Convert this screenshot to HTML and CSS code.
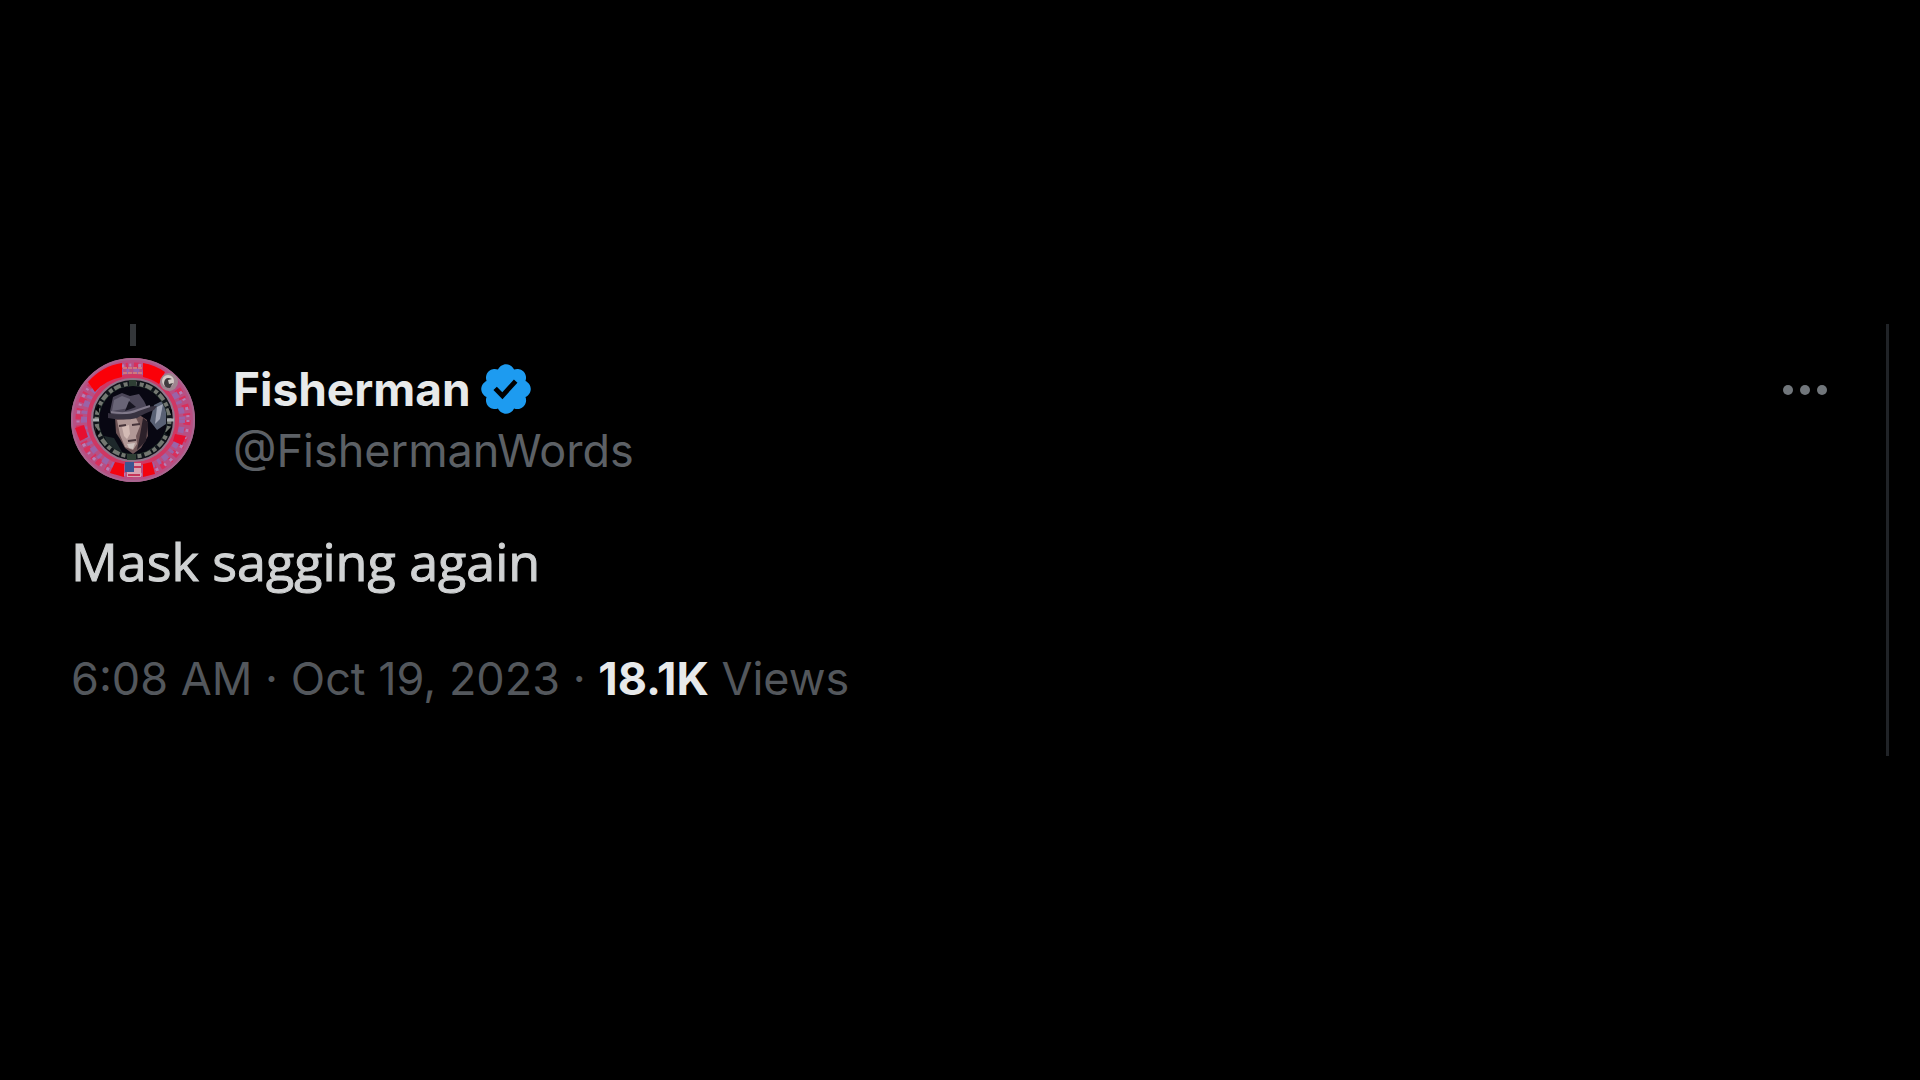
FILE: index.html
```html
<!DOCTYPE html>
<html lang="en">

<head>
    <meta charset="UTF-8">
    <meta name="viewport" content="width=device-width, initial-scale=1.0">
    <title>Fisherman</title>
    <link rel="stylesheet" href="styles.css">
</head>

<body>
    <main class="timeline">
        <article class="tweet">
            <!-- Line to the tweet above -->
            <div class="thread-line"></div>

            <header class="tweet-header">
                <a href="#" class="avatar" aria-label="Fisherman">
                    <svg viewBox="0 0 124 124">
                        <defs>
                            <clipPath id="face">
                                <circle cx="62" cy="62" r="34" />
                            </clipPath>
                        </defs>
                        <circle cx="62" cy="62" r="62" fill="#b84f83" />
                        <circle cx="62" cy="62" r="61" fill="none" stroke="#a8668f" stroke-width="2" />
                        <!-- Lettering band -->
                        <circle cx="62" cy="62" r="54" fill="none" stroke="#d8305c" stroke-width="7" stroke-dasharray="5 4 2 6" />
                        <circle cx="62" cy="62" r="49" fill="none" stroke="#9a63a8" stroke-width="6" stroke-dasharray="3 4 6 3" />
                        <circle cx="62" cy="62" r="55" fill="none" stroke="#b67fb6" stroke-width="3" stroke-dasharray="2 7 3 5" />
                        <circle cx="62" cy="62" r="44" fill="none" stroke="#cf3763" stroke-width="4" />
                        <!-- Red blocks -->
                        <path d="M17 24Q31 8 51 5v14Q34 22 24 34z" fill="#fb0008" />
                        <path d="M72 5q12 2 22 9l-6 12q-7-5-16-7z" fill="#fb0008" />
                        <path d="M44 104l9 2v13l-14-4z" fill="#f2040f" />
                        <path d="M72 106l9-2 3 12-12 3z" fill="#f2040f" />
                        <path d="M4 70l9-3 4 12-8 4zM104 76l11 2-4 9-9-4z" fill="#e60f30" />
                        <path d="M52 10h19M52 15h19" stroke="#d0787c" stroke-width="2" stroke-dasharray="4 1" />
                        <!-- Flag -->
                        <path d="M54 104h9v10h-9z" fill="#3b5691" />
                        <path d="M63 105h7v14H56v-5h7z" fill="#d8a2b0" />
                        <path d="M63 109h7M57 117h12" stroke="#c5365a" stroke-width="2" />
                        <!-- Inner ring -->
                        <circle cx="62" cy="62" r="41" fill="#10141a" stroke="#93758b" stroke-width="2" />
                        <circle cx="62" cy="62" r="36" fill="none" stroke="#737771" stroke-width="5" stroke-dasharray="4 2 7 3" />
                        <circle cx="62" cy="62" r="33" fill="none" stroke="#293a32" stroke-width="3" />
                        <path d="M22 62h8M94 62h9" stroke="#a9adb0" stroke-width="3" />
                        <path d="M58 22h7v10h-7zM56 94h9v8h-9z" fill="#2e3e34" />
                        <path d="M24 51l4-5v9zM97 49l4 3v7zM24 68l5 7-3 3zM101 68l-3 10-4-3z" fill="#020408" />
                        <g clip-path="url(#face)">
                            <rect x="28" y="28" width="68" height="68" fill="#080712" />
                            <path d="M83 47l12-6v25l-9 6-7-9z" fill="#596174" />
                            <path d="M86 49l6-3-3 15-5 5z" fill="#a3a7b7" />
                            <path d="M44 59l26-1 6 4 1 16-7 12-8 6-8-6-5-9-4-6z" fill="#6e5456" />
                            <path d="M46 62l19-2 4 8-4 10 1 8-4 6-8-3-5-12z" fill="#b19896" />
                            <path d="M51 69l7-2 1 9-3 5-3-3z" fill="#d3bbb5" />
                            <path d="M48 68l7-1M61 67l8-1M57 83l8-1" stroke="#46343a" stroke-width="2" />
                            <path d="M56 86l8-1-2 6-4-1z" fill="#cfc3c0" />
                            <path d="M72 60l5 4-2 19-9 9 3-15z" fill="#2b2029" />
                            <path d="M39 53l3-14 9-4 8 3 9-2 5 7 3 6-13 9-22 2z" fill="#4b4658" />
                            <path d="M43 42l8-4 8 3-1 9-17 3z" fill="#696577" />
                            <path d="M58 43l7 6-11 4z" fill="#171521" />
                            <path d="M37 55q15 4 29-2 10-5 20-5l-3 4q-11 4-17 8-13 3-29 0z" fill="#373240" />
                            <path d="M40 54q16 3 27-2l12-4" fill="none" stroke="#80798a" stroke-width="2" />
                            <path d="M33 78l10 2 8 14-11-2z" fill="#1e282b" />
                        </g>
                        <!-- Small round badge -->
                        <circle cx="98" cy="24" r="9" fill="#9e8590" />
                        <circle cx="97" cy="23" r="6" fill="#d4cbc7" />
                        <path d="M93 25q1-7 8-4l-4 1 1 4 4-1-3 5q-6 0-6-5z" fill="#413b3e" />
                    </svg>
                </a>

                <div class="author">
                    <div class="name-row">
                        <a href="#" class="name">Fisherman</a>
                        <svg class="verified" viewBox="0 0 22 22" role="img" aria-label="Verified account">
                            <path d="M20.396 11c-.018-.646-.215-1.275-.57-1.816-.354-.54-.852-.972-1.438-1.246.223-.607.27-1.264.14-1.897-.131-.634-.437-1.218-.882-1.687-.47-.445-1.053-.75-1.687-.882-.633-.13-1.29-.083-1.897.14-.273-.587-.704-1.086-1.245-1.44S11.647 1.62 11 1.604c-.646.017-1.273.213-1.813.568s-.969.854-1.24 1.44c-.608-.223-1.267-.272-1.902-.14-.635.13-1.22.436-1.69.882-.445.47-.749 1.055-.878 1.688-.13.633-.08 1.29.144 1.896-.587.274-1.087.705-1.443 1.245-.356.54-.555 1.17-.574 1.817.02.647.218 1.276.574 1.817.356.54.856.972 1.443 1.245-.224.606-.274 1.263-.144 1.896.13.634.433 1.218.877 1.688.47.443 1.054.747 1.687.878.633.132 1.29.084 1.897-.136.274.586.705 1.084 1.246 1.439.54.354 1.17.551 1.816.569.647-.016 1.276-.213 1.817-.567s.972-.854 1.245-1.44c.604.239 1.266.296 1.903.164.636-.132 1.22-.447 1.68-.907.46-.46.776-1.044.908-1.681s.075-1.299-.165-1.903c.586-.274 1.084-.705 1.439-1.246.354-.54.551-1.17.569-1.816zM9.662 14.85l-3.429-3.428 1.293-1.302 2.072 2.072 4.4-4.794 1.347 1.246z" />
                        </svg>
                    </div>
                    <a href="#" class="handle">@FishermanWords</a>
                </div>

                <button type="button" class="more" aria-label="More">
                    <svg viewBox="0 0 46 12">
                        <circle cx="6" cy="6" r="5" />
                        <circle cx="23" cy="6" r="5" />
                        <circle cx="40" cy="6" r="5" />
                    </svg>
                </button>
            </header>

            <p class="tweet-text">Mask sagging again</p>

            <div class="tweet-meta">
                <a href="#"><time datetime="2023-10-19T06:08">6:08 AM · Oct 19, 2023</time></a> ·
                <strong>18.1K</strong> Views
            </div>
        </article>
    </main>
</body>

</html>
```

FILE: styles.css
```css
body {
    font-family: Inter, Roboto, sans-serif;
    margin: 0;
    background-color: #000;
    color: #e7e9ea;
}

a {
    color: inherit;
    text-decoration: none;
}

.timeline {
    display: flex;
    flex-direction: column;
    justify-content: center;
    min-height: 100vh;
}

.tweet {
    margin-right: 31px;
    padding: 0 58px 46px 71px;
    border-right: 3px solid #202327;
}

.thread-line {
    width: 6px;
    height: 22px;
    margin: 0 0 12px 59px;
    background-color: #333639;
}

.tweet-header {
    display: flex;
    align-items: flex-start;
}

.avatar {
    width: 124px;
    height: 124px;
    margin-right: 38px;
}

.avatar svg,
.verified,
.more svg {
    display: block;
}

.author {
    flex: 1;
    line-height: 62px;
}

.name-row {
    display: flex;
    align-items: center;
    height: 62px;
}

.name {
    font-size: 46px;
    font-weight: 700;
}

.verified {
    width: 58px;
    height: 58px;
    margin-left: 6px;
    fill: #1d9bf0;
}

.handle {
    display: block;
    font-size: 45px;
    color: #5c6065;
}

.more {
    display: flex;
    align-items: center;
    height: 64px;
    padding: 0;
    border: none;
    background: none;
    cursor: pointer;
}

.more svg {
    width: 46px;
    height: 12px;
    fill: #71767b;
}

.tweet-text {
    margin: 47px 0 55px;
    font-family: "Open Sans", sans-serif;
    font-size: 52px;
    line-height: 64px;
    color: #d0d2d3;
    -webkit-text-stroke: 1px #d0d2d3;
}

.tweet-meta {
    font-size: 45px;
    line-height: 62px;
    color: #53575c;
}

.tweet-meta strong {
    font-weight: 700;
    color: #e7e9ea;
}
```
